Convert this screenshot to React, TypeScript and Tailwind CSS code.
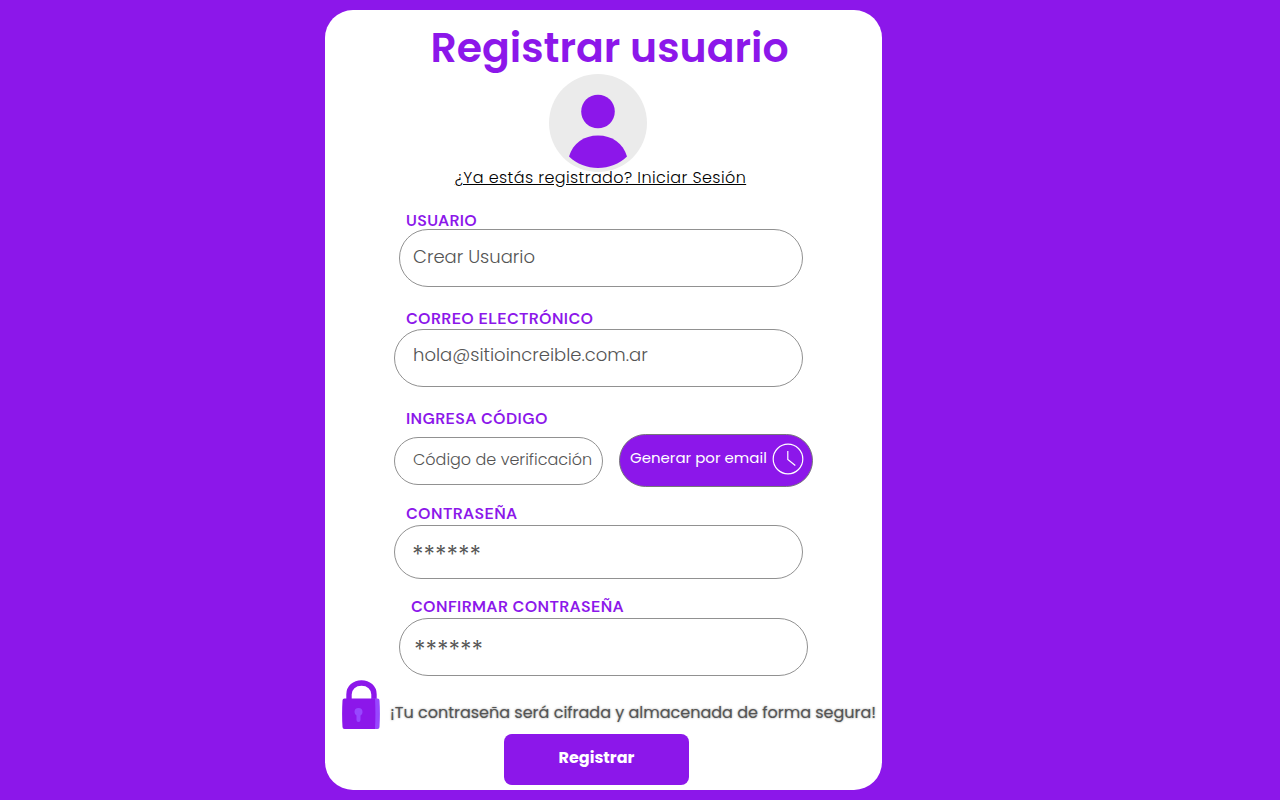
import type { InputHTMLAttributes, ReactNode } from "react";

function Label({ htmlFor, children }: { htmlFor: string; children: ReactNode }) {
  return (
    <label
      htmlFor={htmlFor}
      className="block pl-3 font-['DM_Sans','Poppins',sans-serif] text-base leading-5 font-semibold tracking-wide text-[#8c17ea] uppercase"
    >
      {children}
    </label>
  );
}

function Field({ className, ...props }: InputHTMLAttributes<HTMLInputElement>) {
  return (
    <input
      {...props}
      className={
        "block w-full min-w-0 rounded-full border border-[#919191] bg-white pr-1 text-[#545454] outline-none placeholder:text-[#545454] placeholder:opacity-100 focus:border-[#8c17ea] " +
        className
      }
    />
  );
}

function Avatar() {
  return (
    <svg viewBox="0 0 98 98" className="mx-auto block size-[98px]" aria-hidden="true">
      <circle cx="49" cy="49" r="49" fill="#ebebeb" />
      <circle cx="49" cy="37.500" r="16.800" fill="#8c17ea" />
      <path d="M20 82.500C24 69 35 61.500 49 61.500S74 69 78 82.500C70 90 60 94 49 94S28 90 20 82.500Z" fill="#8c17ea" />
    </svg>
  );
}

function Clock() {
  return (
    <svg viewBox="0 0 32 32" className="size-8 shrink-0" fill="none" stroke="#ffffff" strokeWidth="1.200" aria-hidden="true">
      <circle cx="16" cy="16" r="14.800" />
      <path d="M15.800 8v8.500l7.500 6" />
    </svg>
  );
}

function Lock() {
  return (
    <svg viewBox="0 0 38 50" className="h-[50px] w-[38px] shrink-0" aria-hidden="true">
      <path d="M7 20V14.500C7 7.500 12.500 3 19.500 3S32 7.500 32 14.500V20" fill="none" stroke="#8c17ea" strokeWidth="5.400" />
      <path d="M30 18.500h5.500a2 2 0 0 1 2 2q.8 13 0 26.500a2 2 0 0 1-2 2H30Z" fill="#9747ff" />
      <path d="M2.500 18.500H33q.8 15 0 30.500H2.500a2 2 0 0 1-2-2q-.8-13 0-26.500a2 2 0 0 1 2-2Z" fill="#8c17ea" />
      <path d="M16.500 28a4 4 0 0 1 4 4c0 1.700-.8 2.800-2 3.500V40a2 2 0 0 1-4 0v-4.500a4 4 0 0 1-2-3.500 4 4 0 0 1 4-4Z" fill="#9747ff" />
    </svg>
  );
}

export default function App() {
  return (
    <main className="grid min-h-screen grid-cols-[325fr_557fr_398fr] items-start bg-[#8c17ea] py-2.5 font-['Poppins','Inter',sans-serif]">
      <section className="col-start-2 rounded-[28px] bg-white">
        <header className="pt-3 pr-3 text-center">
          <h1 className="pl-6 text-[41px] leading-[52px] font-semibold whitespace-nowrap text-[#8c17ea]">Registrar usuario</h1>
          <Avatar />
          <a href="#login" className="block pl-1.5 text-base leading-[12px] font-light tracking-wide text-black underline">
            ¿Ya estás registrado? Iniciar Sesión
          </a>
        </header>
        <form className="pt-[27px]" onSubmit={(e) => e.preventDefault()}>
          <div className="px-[69px]">
            <div className="pr-2.5">
              <Label htmlFor="user">Usuario</Label>
              <div className="-mt-0.5 pl-[5px]">
                <Field id="user" type="text" placeholder="Crear Usuario" className="h-[58px] pb-1 pl-[13px] text-lg font-light" />
              </div>
            </div>
            <div className="pt-[22px] pr-2.5">
              <Label htmlFor="email">Correo electrónico</Label>
              <Field id="email" type="email" placeholder="hola@sitioincreible.com.ar" className="h-[58px] pb-2 pl-[18px] text-lg font-light" />
            </div>
            <div className="pt-[22px]">
              <Label htmlFor="code">Ingresa código</Label>
              <div className="flex items-center gap-4 pt-[5px]">
                <Field id="code" type="text" placeholder="Código de verificación" className="h-12 flex-1 pb-0.5 pl-[18px] text-base font-light" />
                <button
                  type="button"
                  className="flex h-[53px] w-[194px] shrink-0 items-center justify-between rounded-full border border-[#77767a] bg-[#8c17ea] pr-2 pb-1 pl-2.5 text-[15px] whitespace-nowrap text-white"
                >
                  Generar por email
                  <Clock />
                </button>
              </div>
            </div>
            <div className="pt-[17px] pr-2.5">
              <Label htmlFor="password">Contraseña</Label>
              <div className="pt-px">
                <Field
                  id="password"
                  type="password"
                  placeholder="******"
                  className="h-[54px] pt-1 pl-[17px] font-['DM_Sans','Poppins',sans-serif] text-2xl"
                />
              </div>
            </div>
            <div className="pt-[18px] pr-[5px] pl-[5px]">
              <Label htmlFor="confirm">Confirmar contraseña</Label>
              <div className="pt-px">
                <Field
                  id="confirm"
                  type="password"
                  placeholder="******"
                  className="h-[58px] pt-1 pl-3.5 font-['DM_Sans','Poppins',sans-serif] text-2xl"
                />
              </div>
            </div>
          </div>
          <div className="flex items-center gap-2.5 pt-1 pl-[17px]">
            <Lock />
            <p className="pt-4 text-base font-normal whitespace-nowrap text-[#545454] text-shadow-[0_0_2px_#545454b0]">
              ¡Tu contraseña será cifrada y almacenada de forma segura!
            </p>
          </div>
          <div className="flex justify-center pt-1 pr-3.5 pb-[5px]">
            <button type="submit" className="h-[51px] w-[185px] rounded-lg bg-[#8c17ea] pb-1 text-base font-bold text-white">
              Registrar
            </button>
          </div>
        </form>
      </section>
    </main>
  );
}
